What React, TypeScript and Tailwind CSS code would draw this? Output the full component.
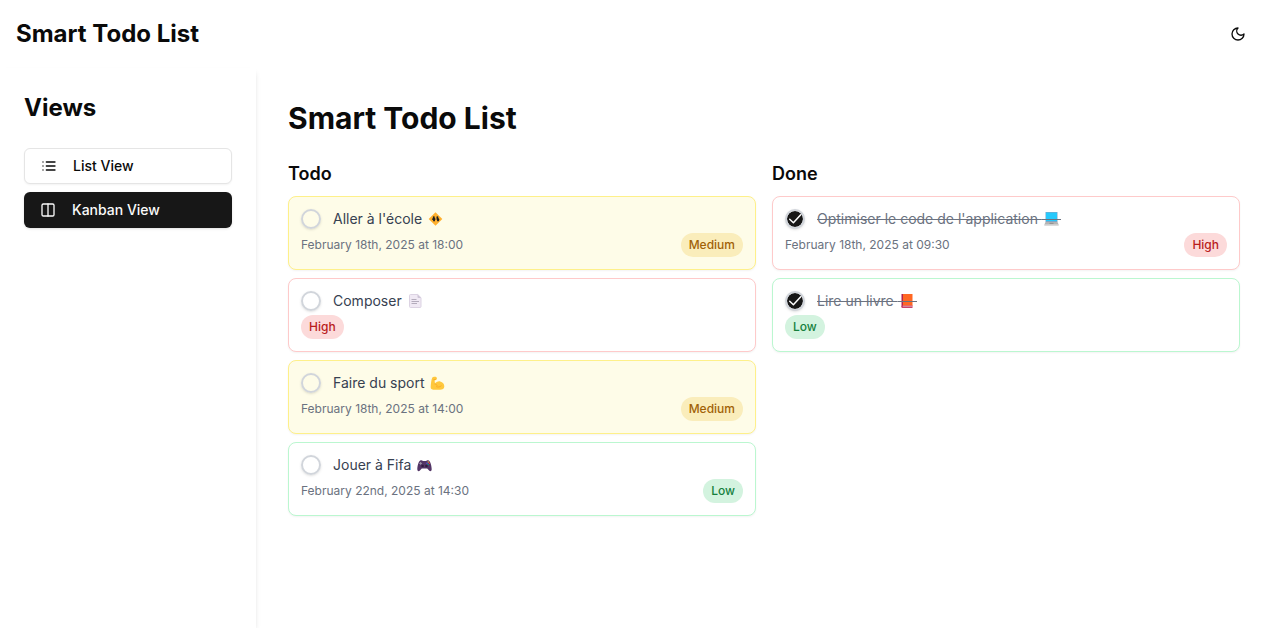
import { useState } from "react";
import type { ReactNode } from "react";

type Priority = "High" | "Medium" | "Low";
type Glyph = "crossing" | "page" | "biceps" | "gamepad" | "laptop" | "book";

interface Task {
  id: number;
  title: string;
  glyph: Glyph;
  glyphLabel: string;
  due?: string;
  priority: Priority;
  done: boolean;
}

const initialTasks: Task[] = [
  { id: 1, title: "Aller à l'école", glyph: "crossing", glyphLabel: "🚸", due: "February 18th, 2025 at 18:00", priority: "Medium", done: false },
  { id: 2, title: "Composer", glyph: "page", glyphLabel: "📄", priority: "High", done: false },
  { id: 3, title: "Faire du sport", glyph: "biceps", glyphLabel: "💪", due: "February 18th, 2025 at 14:00", priority: "Medium", done: false },
  { id: 4, title: "Jouer à Fifa", glyph: "gamepad", glyphLabel: "🎮", due: "February 22nd, 2025 at 14:30", priority: "Low", done: false },
  { id: 5, title: "Optimiser le code de l'application", glyph: "laptop", glyphLabel: "💻", due: "February 18th, 2025 at 09:30", priority: "High", done: true },
  { id: 6, title: "Lire un livre", glyph: "book", glyphLabel: "📕", priority: "Low", done: true },
];

const cardStyles: Record<Priority, string> = {
  High: "border-[#fecaca] bg-white",
  Medium: "border-[#fef08a] bg-[#fefce8]",
  Low: "border-[#bbf7d0] bg-white",
};

const badgeStyles: Record<Priority, string> = {
  High: "bg-[#fcdada] text-[#b91c1c]",
  Medium: "bg-[#faedbb] text-[#a16207]",
  Low: "bg-[#d3f3df] text-[#15803d]",
};

const glyphs: Record<Glyph, ReactNode> = {
  crossing: (
    <>
      <path d="M9.5 1.2 16.3 8l-6.8 6.8L2.7 8Z" fill="#ffb02e" />
      <circle cx="7.8" cy="6.3" r="1" fill="#212121" />
      <circle cx="11.4" cy="6.2" r="1" fill="#212121" />
      <path d="M6.8 7h2l1 1.2-.8.6v1.5H7.1V9L5.800 8.500ZM10.900 7h1.500l1 1.400-.7 1.900h-1.500l-.2-1.700-.900-.400Z" fill="#212121" />
    </>
  ),
  page: (
    <>
      <path d="M4.500 1.500h7.300L15 4.700v8.800a1 1 0 0 1-1 1H4.500a1 1 0 0 1-1-1v-11a1 1 0 0 1 1-1Z" fill="#f0e9f4" stroke="#d8cfe0" strokeWidth="0.9" />
      <path d="M11.500 1.500V4a1 1 0 0 0 1 1H15Z" fill="#cdc4d6" />
      <path d="M5.500 6.500h5M5.500 8.500H13M5.500 10.500h5.500" stroke="#b4acbc" strokeWidth="1" />
    </>
  ),
  biceps: (
    <>
      <path d="M4.2 2.7C5 1.6 7.4 1.4 8.4 2.2c.8.6.7 2-.1 2.5-.7.4-1.4.3-1.7 1L7 8.6c1.2-1.7 3.2-2.7 5.2-2.2 2.5.5 4.2 2.7 4.1 5 0 2.3-1.9 3.3-4.3 3.3H5.2c-2 0-2.7-1.3-2.5-3.1C2.9 8.7 3.3 4.5 4.2 2.7Z" fill="#ffc83d" />
      <path d="M5.7 4.8 7.5 4.3M7 9c1.1.1 1.8.6 2.1 1.5M8.5 11.7c1.7.7 3.3.4 4.7-.8" fill="none" stroke="#f59f24" strokeWidth="0.7" strokeLinecap="round" />
    </>
  ),
  gamepad: (
    <>
      <path d="M5.2 3.6c1-.5 2-.4 2.700.3h3.200c.7-.7 1.700-.8 2.700-.3 1.600.8 2.900 5.600 2.900 8.700 0 1.900-1.500 2.500-2.600 1.300l-1.900-2.200H6.800l-1.900 2.200c-1.100 1.200-2.600.6-2.600-1.300 0-3.100 1.300-7.900 2.900-8.700Z" fill="#533566" />
      <path d="M5.6 5v2.800M4.2 6.400H7" stroke="#998ea4" strokeWidth="1" />
      <circle cx="7.6" cy="9" r="1.3" fill="#321b41" />
      <circle cx="11.4" cy="9" r="1.3" fill="#321b41" />
      <circle cx="13.2" cy="5" r="0.7" fill="#f9c23c" />
      <circle cx="12" cy="6.3" r="0.7" fill="#3f5fff" />
      <circle cx="14.4" cy="6.3" r="0.7" fill="#f8312f" />
      <circle cx="13.2" cy="7.5" r="0.7" fill="#00a67d" />
    </>
  ),
  laptop: (
    <>
      <path d="M3.5 1h12v10h-12Z" fill="#7da6c9" />
      <path d="M4 1.6h11V10H4Z" fill="#26c9fc" />
      <path d="M3.5 11h12l1.2 2.8H2.3Z" fill="#b4b4b4" />
      <path d="M2.3 13.6h14.4v1.2H2.3Z" fill="#d3d3d3" />
      <path d="M7.5 12.3h4" stroke="#8b8b8b" strokeWidth="1" />
    </>
  ),
  book: (
    <>
      <path d="M4 1h10.5v12H4Z" fill="#ff6723" />
      <path d="M3.5 1H5v13H3.5Z" fill="#b4234d" />
      <path d="M4 12.5h10.5V15H4a.8.8 0 0 1-.5-.8v-1Z" fill="#ca4268" />
      <path d="M5 13.2h9.300" stroke="#e9c6d2" strokeWidth="0.7" />
    </>
  ),
};

function TitleGlyph({ name, label, struck }: { name: Glyph; label: string; struck: boolean }) {
  return (
    <svg role="img" aria-label={label} viewBox="0 0 19 16" className="h-4 w-[19px] shrink-0">
      {glyphs[name]}
      {struck && <path d="M0 8.5h19" stroke="#6b7280" strokeWidth="1" />}
    </svg>
  );
}

function TaskCard({ task, onToggle }: { task: Task; onToggle: () => void }) {
  const id = `task-${task.id}`;
  return (
    <li className={`rounded-lg border p-3 shadow-xs ${cardStyles[task.priority]}`}>
      <div className="flex items-center gap-3">
        <span className="relative flex size-5 shrink-0">
          <input
            id={id}
            type="checkbox"
            checked={task.done}
            onChange={onToggle}
            className="size-5 appearance-none rounded-full border-2 border-[#d1d5db] bg-transparent shadow-sm checked:bg-[#171717] checked:bg-clip-padding"
          />
          {task.done && (
            <svg
              viewBox="0 0 20 20"
              className="pointer-events-none absolute inset-0 size-5 text-white"
              fill="none"
              stroke="currentColor"
              strokeWidth="1.5"
              strokeLinecap="round"
              strokeLinejoin="round"
              aria-hidden="true"
            >
              <path d="m4.700 10.300 3.700 3.400 7.300-8" />
            </svg>
          )}
        </span>
        <label htmlFor={id} className={`flex items-center text-sm ${task.done ? "text-[#6b7280]" : "text-[#374151]"}`}>
          <span className={task.done ? "line-through" : ""}>{`${task.title}\u00a0`}</span>
          <TitleGlyph name={task.glyph} label={task.glyphLabel} struck={task.done} />
        </label>
      </div>
      <div className="mt-1 flex items-center justify-between text-xs">
        {task.due && <span className="text-[#6b7280]">{task.due}</span>}
        <span className={`rounded-full px-2 py-1 font-medium ${badgeStyles[task.priority]}`}>{task.priority}</span>
      </div>
    </li>
  );
}

function Column({ title, tasks, onToggle }: { title: string; tasks: Task[]; onToggle: (id: number) => void }) {
  return (
    <section>
      <h2 className="mb-2 text-lg font-semibold">{title}</h2>
      <ul className="flex flex-col gap-2">
        {tasks.map((task) => (
          <TaskCard key={task.id} task={task} onToggle={() => onToggle(task.id)} />
        ))}
      </ul>
    </section>
  );
}

function Icon({ children }: { children: ReactNode }) {
  return (
    <svg viewBox="0 0 24 24" className="size-4 shrink-0" fill="none" stroke="currentColor" strokeWidth="2" strokeLinecap="round" strokeLinejoin="round" aria-hidden="true">
      {children}
    </svg>
  );
}

export default function App() {
  const [tasks, setTasks] = useState(initialTasks);
  const toggle = (id: number) =>
    setTasks((all) => all.map((task) => (task.id === id ? { ...task, done: !task.done } : task)));

  return (
    <div className="flex min-h-screen flex-col bg-white font-[Inter,sans-serif] text-[#0a0a0a]">
      <header className="flex items-center justify-between p-4">
        <h1 className="text-2xl font-bold">Smart Todo List</h1>
        <button type="button" aria-label="Toggle theme" className="flex size-9 items-center justify-center rounded-md">
          <Icon>
            <path d="M12 3a6 6 0 0 0 9 9 9 9 0 1 1-9-9Z" />
          </Icon>
        </button>
      </header>
      <div className="flex flex-1">
        <aside className="w-64 shrink-0 p-6 shadow-md">
          <h2 className="mb-6 text-2xl font-bold">Views</h2>
          <nav className="flex flex-col gap-2 text-sm font-medium">
            <button type="button" className="flex h-9 items-center gap-4 rounded-md border border-[#e5e5e5] bg-white px-4 shadow-xs">
              <Icon>
                <path d="M3 6h.01M3 12h.01M3 18h.01M8 6h13M8 12h13M8 18h13" />
              </Icon>
              List View
            </button>
            <button type="button" className="flex h-9 items-center gap-4 rounded-md bg-[#171717] px-4 text-[#fafafa] shadow-sm">
              <Icon>
                <rect width="18" height="18" x="3" y="3" rx="2" />
                <path d="M12 3v18" />
              </Icon>
              Kanban View
            </button>
          </nav>
        </aside>
        <main className="min-w-0 flex-1 p-8">
          <h1 className="mb-6 text-3xl font-bold">Smart Todo List</h1>
          <div className="grid grid-cols-2 gap-4">
            <Column title="Todo" tasks={tasks.filter((task) => !task.done)} onToggle={toggle} />
            <Column title="Done" tasks={tasks.filter((task) => task.done)} onToggle={toggle} />
          </div>
        </main>
      </div>
    </div>
  );
}
